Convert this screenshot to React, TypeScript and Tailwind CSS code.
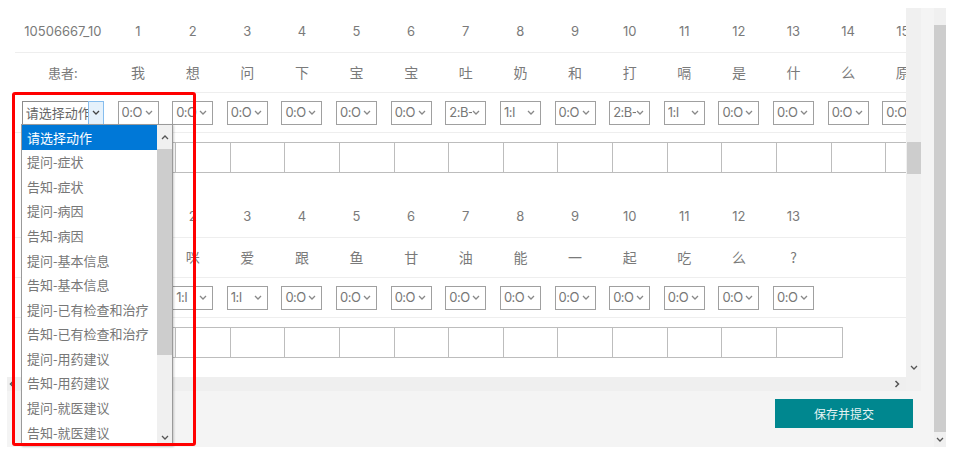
import React from "react";

const COL0 = "w-[95.7px] shrink-0";
const COL = "w-[54.64px] shrink-0";

const block1 = {
  id: "10506667_10",
  speaker: "患者:",
  words: ["我", "想", "问", "下", "宝", "宝", "吐", "奶", "和", "打", "嗝", "是", "什", "么", "原", "因"],
  tags: ["0:O", "0:O", "0:O", "0:O", "0:O", "0:O", "2:B-", "1:I", "0:O", "2:B-", "1:I", "0:O", "0:O", "0:O", "0:O", "0:O"],
  boxes: 17,
  lastWide: false,
};

const block2 = {
  id: "10506667_11",
  speaker: "患者:",
  words: ["咪", "咪", "爱", "跟", "鱼", "甘", "油", "能", "一", "起", "吃", "么", "?"],
  tags: ["1:I", "1:I", "1:I", "0:O", "0:O", "0:O", "0:O", "0:O", "0:O", "0:O", "0:O", "0:O", "0:O"],
  boxes: 13,
  lastWide: true,
};

const actions = [
  "请选择动作",
  "提问-症状",
  "告知-症状",
  "提问-病因",
  "告知-病因",
  "提问-基本信息",
  "告知-基本信息",
  "提问-已有检查和治疗",
  "告知-已有检查和治疗",
  "提问-用药建议",
  "告知-用药建议",
  "提问-就医建议",
  "告知-就医建议",
];

function Chevron({ up = false, className = "" }: { up?: boolean; className?: string }) {
  return (
    <svg width="8" height="5" viewBox="0 0 8 5" className={className}>
      <path d={up ? "M1 4l3-3 3 3" : "M1 1l3 3 3-3"} fill="none" stroke="currentColor" strokeWidth="1.3" />
    </svg>
  );
}

function TagSelect({ value }: { value: string }) {
  return (
    <div className="flex h-[24px] w-[41px] items-center border border-[#a0a0a0] bg-white pl-[3px] pr-[5px] text-[13px] text-[#777]">
      <span className="flex-1 overflow-hidden whitespace-nowrap tracking-[-0.5px]">{value}</span>
      <Chevron className="text-[#888]" />
    </div>
  );
}

function ActionSelect({ open = false }: { open?: boolean }) {
  return (
    <div className="flex h-[24px] w-[82px] items-stretch border border-[#8c8c8c] bg-white text-[13px] text-[#666]">
      <span className="flex flex-1 items-center overflow-hidden whitespace-nowrap pl-[3px] font-['Noto_Sans_CJK_SC',sans-serif]">
        请选择动作
      </span>
      <span
        className={
          open
            ? "-my-px -mr-px flex w-[16px] items-center justify-center border border-[#86bdee] bg-[#e5f1fb] text-[#444]"
            : "flex w-[15px] items-center justify-center text-[#666]"
        }
      >
        <Chevron />
      </span>
    </div>
  );
}

function Block({ data, open = false }: { data: typeof block1; open?: boolean }) {
  const n = data.words.length;
  return (
    <div className="w-[1000px]">
      <div className="flex h-[41px] items-center border-b border-[#eee] text-[13px] text-[#7a7a7a]">
        <div className={`${COL0} text-center`}>{data.id}</div>
        {Array.from({ length: n }, (_, i) => (
          <div key={i} className={`${COL} text-center`}>
            {i + 1}
          </div>
        ))}
      </div>
      <div className="flex h-[40px] items-center border-b border-[#eee] font-['Noto_Sans_CJK_SC',sans-serif] text-[14px] text-[#7a7a7a]">
        <div className={`${COL0} text-center text-[13px]`}>{data.speaker}</div>
        {data.words.map((w, i) => (
          <div key={i} className={`${COL} text-center`}>
            {w}
          </div>
        ))}
      </div>
      <div className="flex h-[40px] items-center border-b border-[#eee]">
        <div className={`${COL0} flex justify-center`}>
          <ActionSelect open={open} />
        </div>
        {data.tags.map((t, i) => (
          <div key={i} className={`${COL} flex justify-center`}>
            <TagSelect value={t} />
          </div>
        ))}
      </div>
      <div className="flex h-[64px] items-start pt-[9px]">
        <div className="w-[105.4px] shrink-0" />
        {Array.from({ length: data.boxes }, (_, i) => {
          const last = i === data.boxes - 1;
          const wide = last && data.lastWide;
          return (
            <div
              key={i}
              className={`h-[31px] shrink-0 border-y border-l border-[#bdbdbd] ${wide ? "w-[67px] border-r" : "w-[54.64px]"}`}
            />
          );
        })}
      </div>
    </div>
  );
}

function ActionDropdown() {
  return (
    <div className="absolute left-[21px] top-[124px] flex h-[322px] w-[152px] border border-[#9a9a9a] bg-white font-['Noto_Sans_CJK_SC',sans-serif] text-[13px] shadow-[1px_1px_2px_rgba(0,0,0,0.2)]">
      <div className="flex w-[135px] flex-col">
        {actions.map((a, i) => (
          <div
            key={a}
            className={`flex h-[24.6px] shrink-0 items-center pl-[5px] ${i === 0 ? "bg-[#0078d7] text-white" : "text-[#777]"}`}
          >
            {a}
          </div>
        ))}
      </div>
      <div className="flex w-[15px] flex-col items-center bg-[#f0f0f0] text-[#555]">
        <div className="flex h-[24px] items-center">
          <Chevron up />
        </div>
        <div className="h-[206px] w-[15px] bg-[#cdcdcd]" />
        <div className="flex-1" />
        <div className="flex h-[16px] items-center">
          <Chevron />
        </div>
      </div>
    </div>
  );
}

export default function App() {
  return (
    <div className="relative h-[469px] w-[964px] overflow-hidden bg-white font-['Inter','Noto_Sans_CJK_SC',sans-serif]">
      <div className="ml-[7px] mt-[8px] flex h-[439px] w-[939px] bg-[#f4f4f4]">
        <div className="flex w-[927px] flex-col">
          <div className="flex h-[383px]">
            <div className="flex w-[899px] flex-col">
              <div className="h-[369px] overflow-hidden bg-white pl-[8px] pt-[4px]">
                <Block data={block1} open />
                <Block data={block2} />
              </div>
              <div className="flex h-[14px] items-center justify-between bg-[#efefef] px-[2px] text-[#555]">
                <svg width="6" height="8" viewBox="0 0 6 8">
                  <path d="M4.5 1L1.5 4l3 3" fill="none" stroke="currentColor" strokeWidth="1.5" />
                </svg>
                <svg width="6" height="8" viewBox="0 0 6 8" className="mr-[4px]">
                  <path d="M1.5 1l3 3-3 3" fill="none" stroke="currentColor" strokeWidth="1.5" />
                </svg>
              </div>
            </div>
            <div className="flex w-[15px] flex-col items-center bg-[#f0f0f0] text-[#555]">
              <div className="h-[134px] shrink-0" />
              <div className="h-[32px] w-[14px] shrink-0 bg-[#cdcdcd]" />
              <div className="flex-1" />
              <div className="mb-[20px] flex h-[8px] items-center">
                <Chevron />
              </div>
            </div>
          </div>
          <div className="flex flex-1 justify-end pr-[21px] pt-[8px]">
            <button className="h-[29px] w-[138px] bg-[#00878f] font-['Noto_Sans_CJK_SC',sans-serif] text-[12px] text-[#e6f4f4]">
              保存并提交
            </button>
          </div>
        </div>
        <div className="w-[13px] shrink-0" />
        <div className="-ml-[13px] flex w-[12px] flex-col items-center bg-[#f0f0f0] text-[#555]">
          <div className="h-[17px] shrink-0" />
          <div className="h-[407px] w-[12px] shrink-0 bg-[#cdcdcd]" />
          <div className="flex flex-1 items-center">
            <Chevron />
          </div>
        </div>
      </div>
      <ActionDropdown />
      <div className="pointer-events-none absolute left-[12px] top-[92px] h-[354px] w-[184px] rounded-[3px] border-[3px] border-[#ff0000]" />
    </div>
  );
}
